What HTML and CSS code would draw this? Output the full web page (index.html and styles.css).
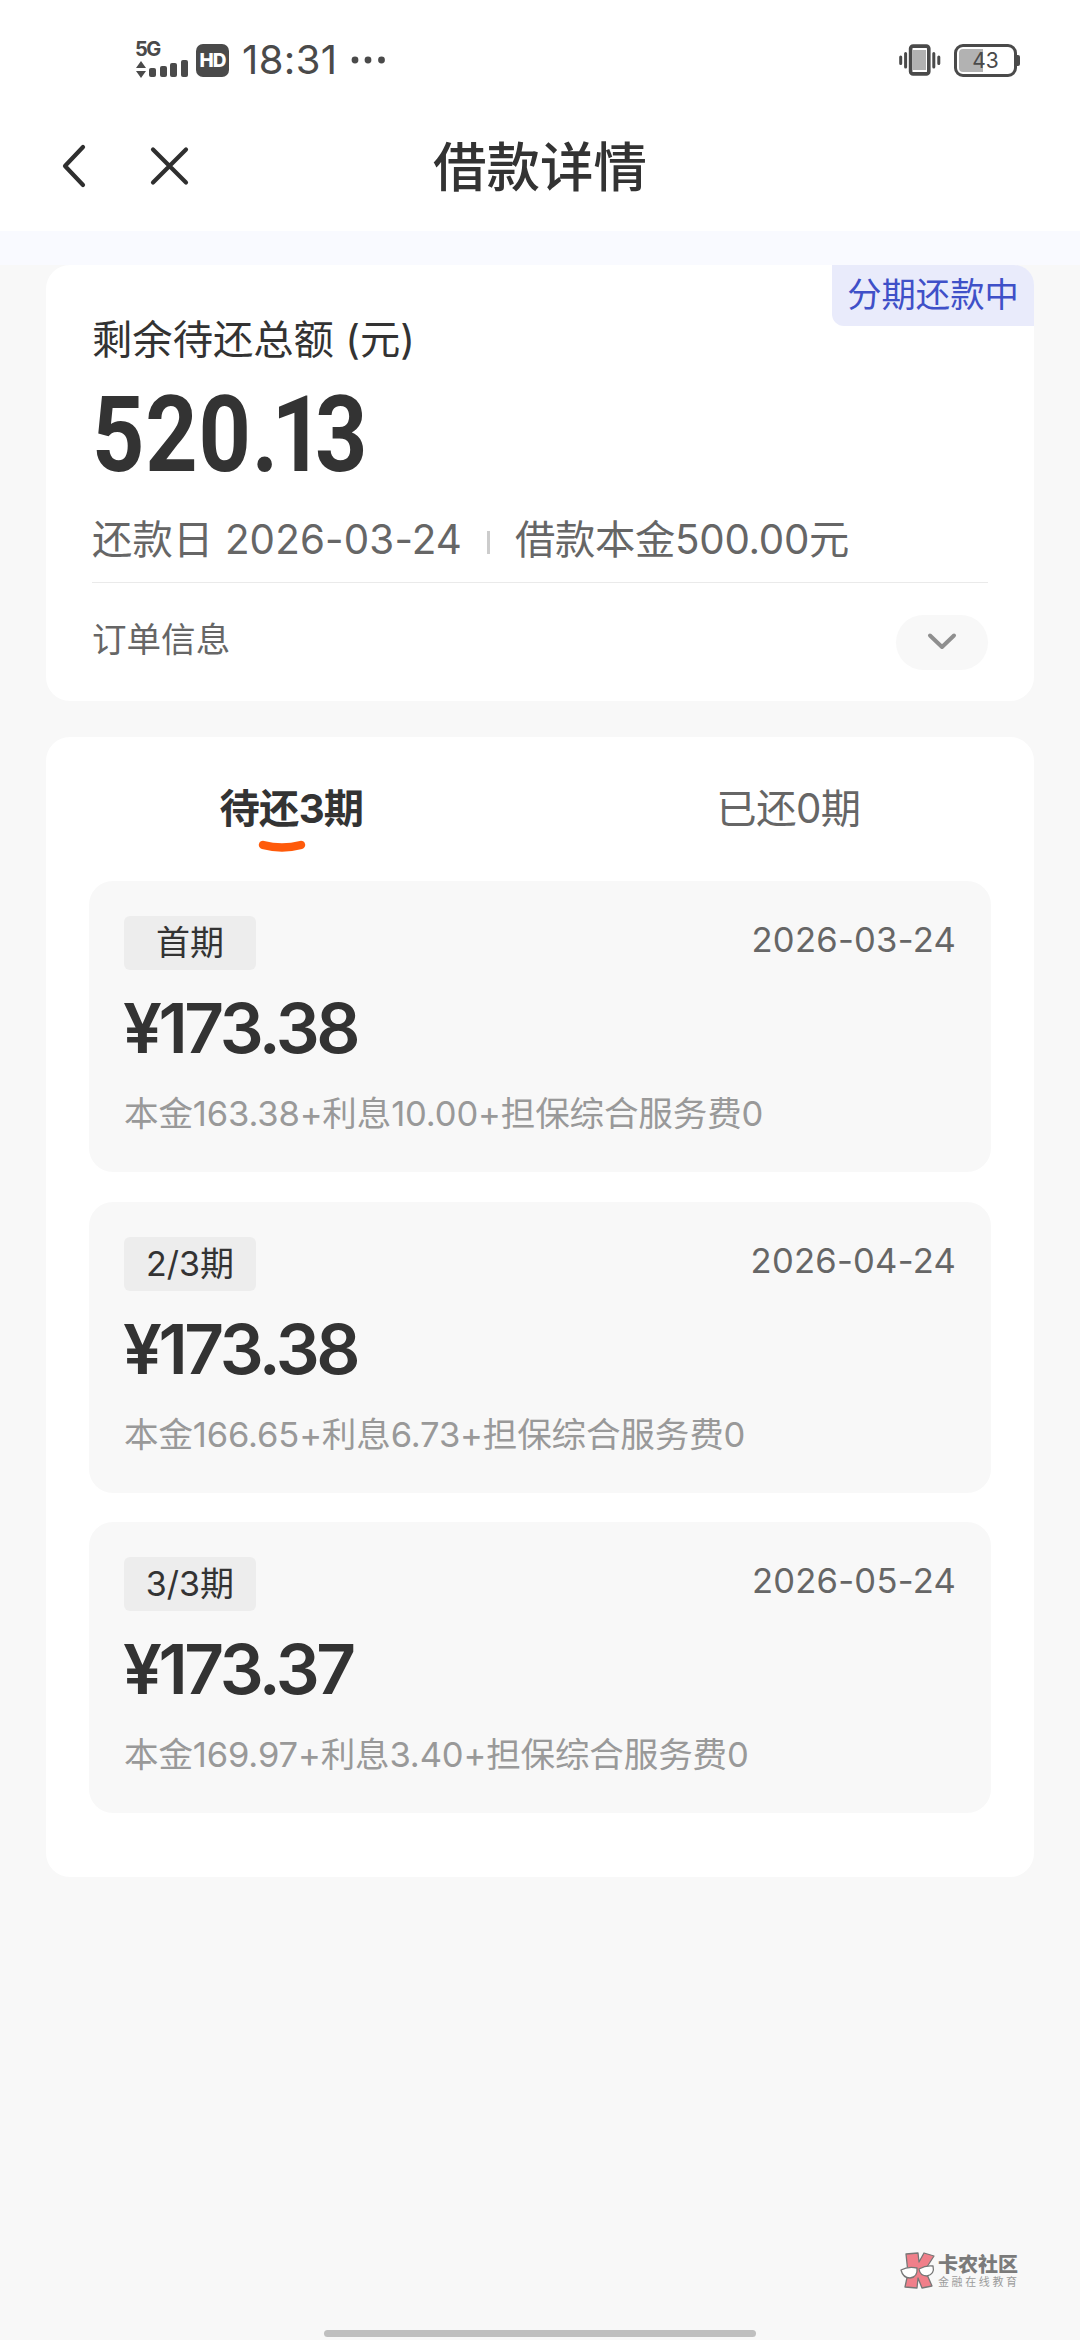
FILE: index.html
```html
<!DOCTYPE html>
<html lang="zh-CN">
<head>
<meta charset="utf-8">
<title>借款详情</title>
<link rel="stylesheet" href="styles.css">
</head>
<body>
<div class="screen">
  <header class="top">
    <div class="status">
      <div class="status-left">
        <div class="network">
          <span class="network-type">5G</span>
          <svg class="signal" width="54" height="20" viewBox="0 0 54 20" fill="#4a4a4a">
            <path d="M6 1l5 7H1zM6 18l5-7H1z"/>
            <rect x="14" y="8" width="7" height="9" rx="2"/>
            <rect x="25" y="6" width="7" height="11" rx="2"/>
            <rect x="35" y="3" width="7" height="14" rx="2"/>
            <rect x="46" y="0" width="7" height="17" rx="2"/>
          </svg>
        </div>
        <span class="hd">HD</span>
        <span class="time">18:31</span>
        <svg class="more" width="34" height="8" viewBox="0 0 34 8" fill="#4a4a4a">
          <circle cx="4" cy="4" r="3.4"/><circle cx="17" cy="4" r="3.4"/><circle cx="30.5" cy="4" r="3.4"/>
        </svg>
      </div>
      <div class="status-right">
        <svg width="42" height="32" viewBox="0 0 42 32" fill="none" stroke="#4a4a4a">
          <rect x="14" y="6" width="13" height="20" fill="#b2b2b2" stroke="none"/>
          <rect x="11.6" y="2.1" width="18.2" height="27.8" rx="2.5" stroke-width="3.6"/>
          <path d="M6.6 9.5v13.5M34.8 9.5v13.5M1.7 13v6.5M39.8 13v6.5" stroke-width="3" stroke-linecap="round"/>
        </svg>
        <div class="battery"><span>43</span></div>
      </div>
    </div>
    <nav class="nav">
      <div class="nav-buttons">
        <svg width="26" height="44" viewBox="0 0 26 44" fill="none" stroke="#2f2f2f" stroke-width="4.2" stroke-linecap="round" stroke-linejoin="round"><path d="M22 3L4 22L22 41"/></svg>
        <svg width="40" height="40" viewBox="0 0 40 40" fill="none" stroke="#2f2f2f" stroke-width="4.2" stroke-linecap="round"><path d="M4 3.5L37 36.500M37 3.5L4 36.500"/></svg>
      </div>
      <h1>借款详情</h1>
    </nav>
  </header>
  <div class="strip"></div>

  <main>
    <section class="card summary">
      <span class="badge">分期还款中</span>
      <p class="label">剩余待还总额 (元)</p>
      <p class="total">520<span class="dot">.</span><span class="one">1</span>3</p>
      <div class="meta"><span class="due">还款日 2026-03-24</span><i></i><span class="principal">借款本金500.00元</span></div>
      <div class="order">
        <span>订单信息</span>
        <button type="button"><svg width="32" height="20" viewBox="0 0 32 20" fill="none" stroke="#8f8f8f" stroke-width="4" stroke-linecap="round" stroke-linejoin="round"><path d="M4 3.5L16 15L28 3.5"/></svg></button>
      </div>
    </section>

    <section class="card plan">
      <div class="tabs">
        <div class="tab active">待还3期
          <svg width="48" height="14" viewBox="0 0 48 14" fill="none" stroke="#ff5a0a" stroke-width="8.400" stroke-linecap="round"><path d="M5 5Q24 10 43 5"/></svg>
        </div>
        <div class="tab paid">已还0期</div>
      </div>
      <article class="item">
        <div class="row"><span class="chip">首期</span><time>2026-03-24</time></div>
        <p class="amount">¥173.38</p>
        <p class="detail">本金163.38+利息10.00+担保综合服务费0</p>
      </article>
      <article class="item">
        <div class="row"><span class="chip">2/3期</span><time>2026-04-24</time></div>
        <p class="amount">¥173.38</p>
        <p class="detail">本金166.65+利息6.73+担保综合服务费0</p>
      </article>
      <article class="item">
        <div class="row"><span class="chip">3/3期</span><time>2026-05-24</time></div>
        <p class="amount">¥173.37</p>
        <p class="detail">本金169.97+利息3.40+担保综合服务费0</p>
      </article>
    </section>
  </main>

  <div class="watermark">
    <svg width="36" height="38" viewBox="0 0 36 38" stroke="#777" stroke-width="1.3" stroke-linejoin="round">
      <path d="M6 2L18 1L19 10L24 1L34 4L25 18L32 34L22 36L18 26L17 36L5 35L8 21Z" fill="#f07f8a"/>
      <path d="M1 18Q8 14 17 16Q18 25 10 26Q3 26 1 18ZM19 17Q26 13 33 14Q35 22 27 24Q20 24 19 17Z" fill="#fff"/>
    </svg>
    <div class="watermark-text"><b>卡农社区</b><span>金融在线教育</span></div>
  </div>
  <div class="home-bar"></div>
</div>
</body>
</html>
```
FILE: styles.css
```css
* { box-sizing: border-box; margin: 0; padding: 0; }

body {
  background: #f8f8f8;
  color: #333;
  font-family: Inter, "Noto Sans CJK SC", sans-serif;
}

svg { display: block; flex: none; }

.screen { position: relative; width: 1080px; height: 2340px; overflow: hidden; }

.top { height: 231px; background: #fff; }

.status {
  display: flex;
  justify-content: space-between;
  height: 110px;
  padding: 10px 63px 0 135px;
  color: #4a4a4a;
}

.status-left { display: flex; align-items: center; height: 100px; }
.network { width: 54px; margin-right: 7px; padding-top: 1px; }
.network-type { display: block; font-size: 20px; font-weight: 700; line-height: 15px; letter-spacing: -1.5px; margin-bottom: 3px; }

.hd {
  width: 33px;
  height: 33px;
  margin-right: 13px;
  border-radius: 7px;
  background: #4a4a4a;
  color: #fff;
  font-size: 19px;
  font-weight: 800;
  line-height: 33px;
  letter-spacing: -1px;
  text-align: center;
}

.time { width: 109px; font-size: 40px; line-height: 48px; letter-spacing: 0.4px; white-space: nowrap; }

.status-right { display: flex; align-items: center; gap: 13px; height: 100px; }

.battery {
  position: relative;
  width: 63px;
  height: 33px;
  border: 3px solid #4a4a4a;
  border-radius: 9px;
  padding: 2px;
  background: linear-gradient(90deg, #b2b2b2 24px, #fff 24px) content-box;
  font-size: 21px;
  line-height: 23px;
  text-align: center;
}

.battery::after {
  content: "";
  position: absolute;
  right: -6px;
  top: 8px;
  width: 3px;
  height: 11px;
  border-radius: 0 2px 2px 0;
  background: #4a4a4a;
}

.nav { display: grid; grid-template-columns: 300px 1fr 300px; align-items: center; height: 112px; }
.nav-buttons { display: flex; align-items: center; gap: 62px; padding-left: 61px; }
.nav h1 { padding-top: 4px; font-size: 53.5px; font-weight: 500; line-height: 72px; text-align: center; }

.strip { height: 34px; background: #f9faff; }

main { display: flex; flex-direction: column; gap: 36px; padding: 0 46px; }

.card { position: relative; border-radius: 24px; background: #fff; }

.summary { height: 436px; padding: 46px 46px 0; }

.badge {
  position: absolute;
  top: 0;
  right: 0;
  width: 202px;
  height: 61px;
  border-radius: 0 20px 0 12px;
  background: #e9ebfb;
  color: #3f50c8;
  font-size: 34.3px;
  line-height: 60px;
  text-align: center;
}

.label { padding-top: 1px; font-size: 40.32px; line-height: 56px; }

.total {
  width: 400px;
  margin-top: 18px;
  font-family: Roboto, sans-serif;
  font-size: 105px;
  font-weight: 700;
  line-height: 100px;
  letter-spacing: 1px;
  transform: scaleX(0.87);
  transform-origin: left;
}
.total .dot { letter-spacing: -8px; }
.total .one { letter-spacing: -10px; }

.meta {
  display: flex;
  align-items: center;
  margin-top: 26px;
  padding-bottom: 14px;
  border-bottom: 1.5px solid #eaeaea;
  color: #666;
  font-size: 40.32px;
  line-height: 56px;
  white-space: nowrap;
}
.meta .due { letter-spacing: 0.15px; }
.meta i { width: 3px; height: 23px; margin: 4px 25px 0 25px; background: #ccc; }
.meta .principal { letter-spacing: -0.3px; }

.order { display: flex; align-items: center; justify-content: space-between; height: 118px; color: #666; font-size: 34.56px; }
.order span { padding-bottom: 5px; line-height: 48px; }
.order button {
  display: flex;
  align-items: center;
  justify-content: center;
  width: 92px;
  height: 55px;
  border: 0;
  border-radius: 28px;
  background: #f8f8f8;
}

.plan { height: 1140px; padding: 0 43px; }

.tabs { display: flex; height: 144px; margin: 0 -43px; padding-top: 44px; }
.tab { position: relative; flex: 1; color: #666; font-size: 40.32px; line-height: 56px; text-align: center; letter-spacing: -0.5px; }
.tab.active { padding-right: 3px; color: #333; font-weight: 700; letter-spacing: -0.8px; }
.tab.paid { padding-left: 3px; }
.tab svg { position: absolute; left: 212px; top: 59px; }

.item { height: 291px; margin-bottom: 29.5px; padding: 35px 35px 0; border-radius: 24px; background: #f8f8f8; }
.row { display: flex; justify-content: space-between; align-items: flex-start; }
.chip {
  width: 132px;
  height: 54px;
  border-radius: 6px;
  background: #ededed;
  font-size: 34px;
  line-height: 54px;
  text-align: center;
}
.row time { color: #666; font-size: 34.56px; line-height: 47px; letter-spacing: 0.25px; }
.amount { margin: 16px 0 0 -1px; font-size: 69.12px; font-weight: 600; line-height: 84px; letter-spacing: -3.4px; }
.detail { margin-top: 20px; color: #999; font-size: 34.56px; line-height: 48px; letter-spacing: -0.15px; white-space: nowrap; }

.watermark { position: absolute; left: 900px; top: 2252px; display: flex; align-items: center; gap: 2px; }
.watermark-text { display: flex; flex-direction: column; width: 80px; color: #7b7b7b; white-space: nowrap; }
.watermark-text b { font-size: 20px; font-weight: 900; line-height: 22px; }
.watermark-text span { color: #9c9c9c; font-size: 11px; line-height: 13px; letter-spacing: 2.6px; }

.home-bar { position: absolute; left: 324px; top: 2330px; width: 432px; height: 7px; border-radius: 4px; background: #bfbfbf; }
```
